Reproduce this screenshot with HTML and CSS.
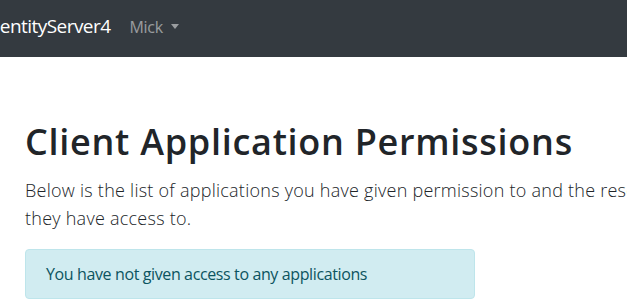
FILE: index.html
```
<!DOCTYPE html>
<html lang="en">
<head>
    <meta charset="UTF-8">
    <meta name="viewport" content="width=device-width, initial-scale=1.0">
    <title>IdentityServer4</title>
    <link rel="stylesheet" href="styles.css">
</head>
<body>
    <nav class="navbar">
        <a href="#" class="navbar-brand">IdentityServer4</a>
        <ul class="navbar-nav">
            <li class="nav-item">
                <a href="#" class="nav-link dropdown-toggle">Mick</a>
            </li>
        </ul>
    </nav>

    <div class="container body-container">
        <div class="grants-page">
            <div class="lead">
                <h1>Client Application Permissions</h1>
                <p>Below is the list of applications you have given permission to and the resources they have access to.</p>
            </div>
            <div class="row">
                <div class="col-sm-8">
                    <div class="alert alert-info">
                        You have not given access to any applications
                    </div>
                </div>
            </div>
        </div>
    </div>
</body>
</html>
```

FILE: styles.css
```
html, body {
    overflow: hidden;
}

body {
    margin: 0;
    font-family: 'Open Sans', 'Noto Sans', sans-serif;
    font-size: 16px;
    line-height: 1.5;
    color: #212529;
    background-color: #fff;
}

a {
    text-decoration: none;
}

/* navbar */
.navbar {
    display: flex;
    align-items: baseline;
    height: 57px;
    padding: 11px 0 0;
    background-color: #343a40;
    box-sizing: border-box;
}

.navbar-brand {
    margin-left: -16px;
    margin-right: 19px;
    font-size: 19px;
    line-height: 30px;
    letter-spacing: -0.55px;
    color: #fff;
    white-space: nowrap;
}

.navbar-nav {
    display: flex;
    margin: 0;
    padding: 0;
    list-style: none;
}

.nav-link {
    display: block;
    letter-spacing: -0.3px;
    color: rgba(255, 255, 255, 0.5);
}

.dropdown-toggle::after {
    content: "";
    display: inline-block;
    margin-left: 8px;
    vertical-align: 4px;
    border-top: 5px solid;
    border-right: 4.5px solid transparent;
    border-left: 4.5px solid transparent;
}

/* content */
.container {
    width: 690px;
    padding: 0 15px;
    margin-left: 10px;
}

.body-container {
    padding-top: 63px;
}

h1 {
    margin: 0 0 13px;
    font-size: 36px;
    font-weight: 600;
    line-height: 1.2;
    letter-spacing: 0.72px;
}

.lead {
    font-size: 18px;
    font-weight: 300;
}

.lead p {
    max-width: 660px;
    margin: 0 0 17px;
    line-height: 28px;
    letter-spacing: 0.25px;
}

.row {
    display: flex;
    margin: 0 -15px;
}

.col-sm-8 {
    flex: 0 0 66.666667%;
    max-width: 66.666667%;
    padding: 0 15px;
    box-sizing: border-box;
}

.alert {
    padding: 12px 20px;
    margin-bottom: 16px;
    border: 1px solid transparent;
    border-radius: 4px;
    letter-spacing: -0.38px;
}

.alert-info {
    color: #0c5460;
    background-color: #d1ecf1;
    border-color: #bee5eb;
}
```
